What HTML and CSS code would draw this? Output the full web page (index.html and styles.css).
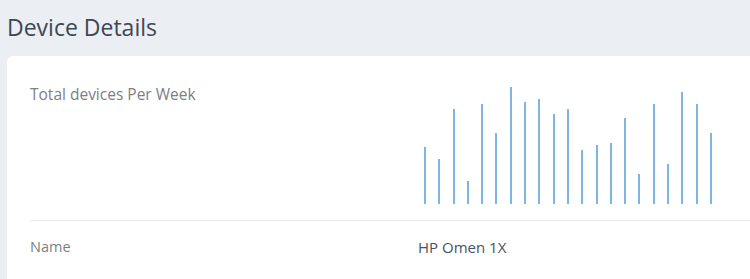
FILE: index.html
```html
<!DOCTYPE html>
<html>
<head>
<meta charset="utf-8">
<link rel="stylesheet" href="styles.css">
</head>
<body>
<h1 class="page-title">Device Details</h1>
<section class="card">
  <div class="row row-chart">
    <div class="label">Total devices Per Week</div>
    <div class="chart">
      <span class="bar" style="height:57px"></span>
      <span class="bar" style="height:45px"></span>
      <span class="bar" style="height:95px"></span>
      <span class="bar" style="height:23px"></span>
      <span class="bar" style="height:100px"></span>
      <span class="bar" style="height:71px"></span>
      <span class="bar" style="height:117px"></span>
      <span class="bar" style="height:102px"></span>
      <span class="bar" style="height:105px"></span>
      <span class="bar" style="height:90px"></span>
      <span class="bar" style="height:95px"></span>
      <span class="bar" style="height:54px"></span>
      <span class="bar" style="height:59px"></span>
      <span class="bar" style="height:61px"></span>
      <span class="bar" style="height:86px"></span>
      <span class="bar" style="height:30px"></span>
      <span class="bar" style="height:100px"></span>
      <span class="bar" style="height:40px"></span>
      <span class="bar" style="height:112px"></span>
      <span class="bar" style="height:100px"></span>
      <span class="bar" style="height:71px"></span>
    </div>
  </div>
  <div class="row row-info">
    <div class="label">Name</div>
    <div class="value">HP Omen 1X</div>
  </div>
</section>
</body>
</html>
```
FILE: styles.css
```css
html, body {
  margin: 0;
  padding: 0;
}
body {
  background: #ebeef2;
  font-family: "Open Sans", "Noto Sans", sans-serif;
  overflow: hidden;
  height: 279px;
}
.page-title {
  margin: 0;
  padding: 12px 0 0 7px;
  font-size: 23px;
  line-height: 30px;
  font-weight: 400;
  color: #3d4756;
}
.card {
  margin: 14px 0 0 7px;
  background: #ffffff;
  border-radius: 6px 0 0 0;
  padding: 30px 0 30px 23px;
}
.row {
  display: grid;
  grid-template-columns: 388px 1fr;
}
.row-chart {
  padding-bottom: 16px;
  border-bottom: 1px solid #e6e9ed;
}
.label {
  font-size: 15.5px;
  line-height: 16px;
  color: #7b8087;
}
.chart {
  margin-left: 6px;
  width: 288px;
  height: 118px;
  display: flex;
  justify-content: space-between;
  align-items: flex-end;
}
.bar {
  width: 2px;
  background: #7db6e1;
}
.row-info {
  padding-top: 17px;
}
.row-info .label {
  font-size: 14.5px;
  line-height: 18px;
}
.value {
  font-size: 15px;
  line-height: 18px;
  color: #4a5361;
}
```
